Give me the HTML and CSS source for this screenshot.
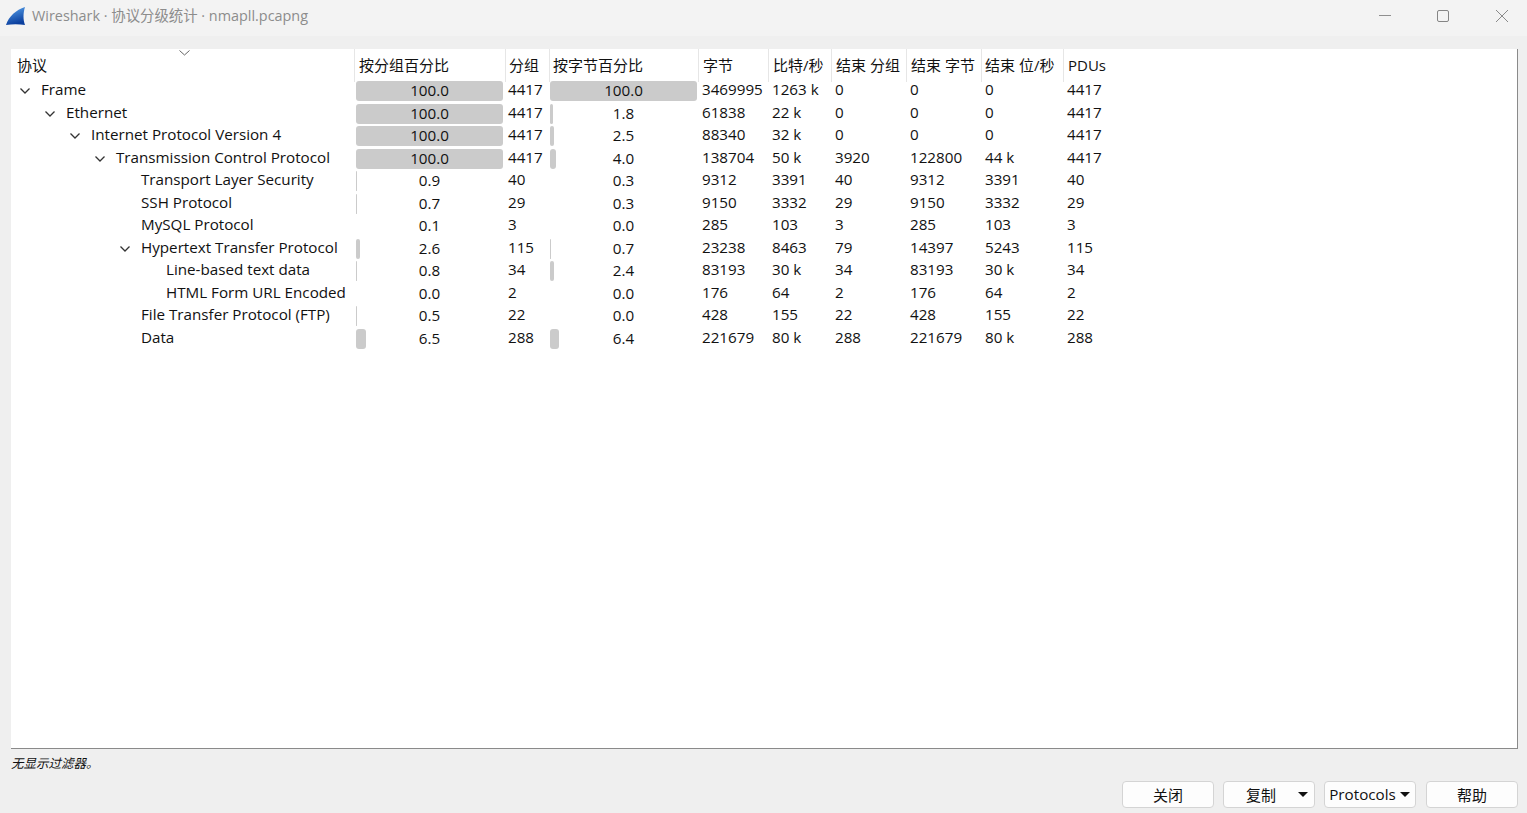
FILE: index.html
```html
<!DOCTYPE html>
<html lang="zh">
<head>
<meta charset="utf-8">
<title>Wireshark · 协议分级统计 · nmapll.pcapng</title>
<link rel="stylesheet" href="styles.css">
</head>
<body>
<header class="titlebar">
  <svg class="logo" width="20" height="19" viewBox="0 0 20 19"><defs><linearGradient id="fin" x1="0" y1="0" x2="0.3" y2="1"><stop offset="0" stop-color="#5aa5ee"/><stop offset="1" stop-color="#0b3f9e"/></linearGradient></defs><path d="M0 18 C3 9 10 3 19 0 C17 6 17 13 19 18 C13 17 6 17 0 18Z" fill="url(#fin)"/></svg>
  <span class="title">Wireshark · 协议分级统计 · nmapll.pcapng</span>
  <div class="winctl">
    <svg width="14" height="14" viewBox="0 0 14 14"><path d="M2 6.500H14" stroke="#8f8f8f" fill="none"/></svg>
    <svg width="14" height="14" viewBox="0 0 14 14"><rect x="1.500" y="1.500" width="11" height="11" rx="1.500" stroke="#858585" fill="none"/></svg>
    <svg width="14" height="14" viewBox="0 0 14 14"><path d="M1 1L13 13M13 1L1 13" stroke="#8a8a8a" fill="none"/></svg>
  </div>
</header>
<main class="content">
  <section class="panel">
    <div class="row head">
      <div class="hc first">协议<svg class="sort" width="11" height="6" viewBox="0 0 11 6"><path d="M.5 .5L5.500 5L10.500 .5" stroke="#666" fill="none"/></svg></div>
      <div class="hc">按分组百分比</div><div class="hc tight">分组</div><div class="hc tight">按字节百分比</div><div class="hc">字节</div><div class="hc">比特/秒</div><div class="hc">结束 分组</div><div class="hc">结束 字节</div><div class="hc tight">结束 位/秒</div><div class="hc">PDUs</div>
    </div>
    <div class="row">
      <div class="name l0"><svg class="chev" width="10" height="6" viewBox="0 0 10 6"><path d="M.5 .5L5 5L9.500 .5" stroke="#333" stroke-width="1.300" fill="none"/></svg>Frame</div>
      <div class="pct"><i class="bar" style="width:100%"></i><b>100.0</b></div><div class="num">4417</div><div class="pct"><i class="bar" style="width:100%"></i><b>100.0</b></div><div class="num">3469995</div><div class="num">1263 k</div><div class="num">0</div><div class="num">0</div><div class="num">0</div><div class="num">4417</div>
    </div>
    <div class="row">
      <div class="name l1"><svg class="chev" width="10" height="6" viewBox="0 0 10 6"><path d="M.5 .5L5 5L9.500 .5" stroke="#333" stroke-width="1.300" fill="none"/></svg>Ethernet</div>
      <div class="pct"><i class="bar" style="width:100%"></i><b>100.0</b></div><div class="num">4417</div><div class="pct"><i class="bar" style="width:1.800%"></i><b>1.8</b></div><div class="num">61838</div><div class="num">22 k</div><div class="num">0</div><div class="num">0</div><div class="num">0</div><div class="num">4417</div>
    </div>
    <div class="row">
      <div class="name l2"><svg class="chev" width="10" height="6" viewBox="0 0 10 6"><path d="M.5 .5L5 5L9.500 .5" stroke="#333" stroke-width="1.300" fill="none"/></svg>Internet Protocol Version 4</div>
      <div class="pct"><i class="bar" style="width:100%"></i><b>100.0</b></div><div class="num">4417</div><div class="pct"><i class="bar" style="width:2.500%"></i><b>2.5</b></div><div class="num">88340</div><div class="num">32 k</div><div class="num">0</div><div class="num">0</div><div class="num">0</div><div class="num">4417</div>
    </div>
    <div class="row">
      <div class="name l3"><svg class="chev" width="10" height="6" viewBox="0 0 10 6"><path d="M.5 .5L5 5L9.500 .5" stroke="#333" stroke-width="1.300" fill="none"/></svg>Transmission Control Protocol</div>
      <div class="pct"><i class="bar" style="width:100%"></i><b>100.0</b></div><div class="num">4417</div><div class="pct"><i class="bar" style="width:4%"></i><b>4.0</b></div><div class="num">138704</div><div class="num">50 k</div><div class="num">3920</div><div class="num">122800</div><div class="num">44 k</div><div class="num">4417</div>
    </div>
    <div class="row">
      <div class="name l4">Transport Layer Security</div>
      <div class="pct"><i class="bar" style="width:.9%"></i><b>0.9</b></div><div class="num">40</div><div class="pct"><b>0.3</b></div><div class="num">9312</div><div class="num">3391</div><div class="num">40</div><div class="num">9312</div><div class="num">3391</div><div class="num">40</div>
    </div>
    <div class="row">
      <div class="name l4">SSH Protocol</div>
      <div class="pct"><i class="bar" style="width:.7%"></i><b>0.7</b></div><div class="num">29</div><div class="pct"><b>0.3</b></div><div class="num">9150</div><div class="num">3332</div><div class="num">29</div><div class="num">9150</div><div class="num">3332</div><div class="num">29</div>
    </div>
    <div class="row">
      <div class="name l4">MySQL Protocol</div>
      <div class="pct"><b>0.1</b></div><div class="num">3</div><div class="pct"><b>0.0</b></div><div class="num">285</div><div class="num">103</div><div class="num">3</div><div class="num">285</div><div class="num">103</div><div class="num">3</div>
    </div>
    <div class="row">
      <div class="name l4"><svg class="chev" width="10" height="6" viewBox="0 0 10 6"><path d="M.5 .5L5 5L9.500 .5" stroke="#333" stroke-width="1.300" fill="none"/></svg>Hypertext Transfer Protocol</div>
      <div class="pct"><i class="bar" style="width:2.600%"></i><b>2.6</b></div><div class="num">115</div><div class="pct"><i class="bar" style="width:.7%"></i><b>0.7</b></div><div class="num">23238</div><div class="num">8463</div><div class="num">79</div><div class="num">14397</div><div class="num">5243</div><div class="num">115</div>
    </div>
    <div class="row">
      <div class="name l5">Line-based text data</div>
      <div class="pct"><i class="bar" style="width:.8%"></i><b>0.8</b></div><div class="num">34</div><div class="pct"><i class="bar" style="width:2.400%"></i><b>2.4</b></div><div class="num">83193</div><div class="num">30 k</div><div class="num">34</div><div class="num">83193</div><div class="num">30 k</div><div class="num">34</div>
    </div>
    <div class="row">
      <div class="name l5">HTML Form URL Encoded</div>
      <div class="pct"><b>0.0</b></div><div class="num">2</div><div class="pct"><b>0.0</b></div><div class="num">176</div><div class="num">64</div><div class="num">2</div><div class="num">176</div><div class="num">64</div><div class="num">2</div>
    </div>
    <div class="row">
      <div class="name l4">File Transfer Protocol (FTP)</div>
      <div class="pct"><i class="bar" style="width:.5%"></i><b>0.5</b></div><div class="num">22</div><div class="pct"><b>0.0</b></div><div class="num">428</div><div class="num">155</div><div class="num">22</div><div class="num">428</div><div class="num">155</div><div class="num">22</div>
    </div>
    <div class="row">
      <div class="name l4">Data</div>
      <div class="pct"><i class="bar" style="width:6.500%"></i><b>6.5</b></div><div class="num">288</div><div class="pct"><i class="bar" style="width:6.400%"></i><b>6.4</b></div><div class="num">221679</div><div class="num">80 k</div><div class="num">288</div><div class="num">221679</div><div class="num">80 k</div><div class="num">288</div>
    </div>
  </section>
  <p class="status">无显示过滤器。</p>
  <footer class="buttons">
    <button class="btn">关闭</button>
    <button class="btn copy"><span>复制</span><i class="caret"></i></button>
    <button class="btn proto"><span>Protocols</span><i class="caret"></i></button>
    <button class="btn help">帮助</button>
  </footer>
</main>
</body>
</html>
```

FILE: styles.css
```css
* { box-sizing: border-box; }
html, body { margin: 0; height: 813px; overflow: hidden; }
body {
  background: #efefef;
  color: #111;
  font-family: "Open Sans", "Noto Sans CJK SC", sans-serif;
  font-size: 15.200px;
}
.titlebar {
  height: 36px;
  background: #f3f3f3;
  display: flex;
  align-items: center;
  padding-left: 6px;
}
.logo { margin-right: 6px; margin-top: -3px; }
.title { color: #8c8c8c; font-size: 14.400px; margin-top: -8px; }
.winctl {
  margin-left: auto;
  display: flex;
  gap: 45px;
  padding-right: 18px;
  margin-top: -5px;
}
.content { padding: 13px 9px 0 11px; }
.panel {
  height: 700px;
  background: #fff;
  border-right: 1px solid #8a8a8a;
  border-bottom: 1px solid #8a8a8a;
}
.row {
  display: grid;
  grid-template-columns: 343px 151px 44px 149px 70px 63px 75px 75px 82px 60px;
  height: 22.500px;
  line-height: 18px;
  white-space: nowrap;
}
.row.head { height: 31px; line-height: 33px; }
.hc {
  position: relative;
  padding-left: 4px;
  border-left: 1px solid #e6e6e6;
  font-size: 15px;
}
.hc.tight { padding-left: 3px; }
.hc.first { border-left: 0; padding-left: 6px; }
.sort { position: absolute; left: 168px; top: 1px; }
.name { position: relative; }
.l0 { padding-left: 30px; }
.l1 { padding-left: 55px; }
.l2 { padding-left: 80px; }
.l3 { padding-left: 105px; }
.l4 { padding-left: 130px; }
.l5 { padding-left: 155px; }
.chev { position: absolute; top: 8px; }
.l0 .chev { left: 9px; }
.l1 .chev { left: 34px; }
.l2 .chev { left: 59px; }
.l3 .chev { left: 84px; }
.l4 .chev { left: 109px; }
.num { padding-left: 4px; }
.pct + .num { padding-left: 3px; }
.num + .pct + .num { padding-left: 4px; }
.pct {
  position: relative;
  margin: 1px 2px 1.500px 2px;
  text-align: center;
  line-height: 19.500px;
}
.num + .pct { margin-left: 1px; margin-right: 1px; }
.pct b { position: relative; font-weight: 400; }
.bar {
  position: absolute;
  left: 0;
  top: 0;
  bottom: 0;
  min-width: 1px;
  background: #cbcbcb;
  border-radius: 3px;
}
.status {
  margin: 7px 0 0;
  height: 16px;
  line-height: 16px;
  font-size: 12.500px;
  font-style: italic;
}
.buttons {
  display: flex;
  justify-content: flex-end;
  margin-top: 9px;
  gap: 9px;
}
.btn {
  width: 92px;
  height: 27px;
  padding: 0 0 1px;
  background: #fdfdfd;
  border: 1px solid #d4d4d4;
  border-radius: 4px;
  color: #111;
  font: inherit;
  font-size: 15px;
  display: flex;
  align-items: center;
  justify-content: center;
}
.help { margin-left: 1px; }
.copy { justify-content: flex-start; padding-left: 22px; }
.copy .caret { margin-left: 22px; }
.proto { gap: 4px; padding-right: 1px; font-size: 15.200px; }
.caret {
  width: 0;
  height: 0;
  border-left: 5px solid transparent;
  border-right: 5px solid transparent;
  border-top: 5px solid #111;
}
```
